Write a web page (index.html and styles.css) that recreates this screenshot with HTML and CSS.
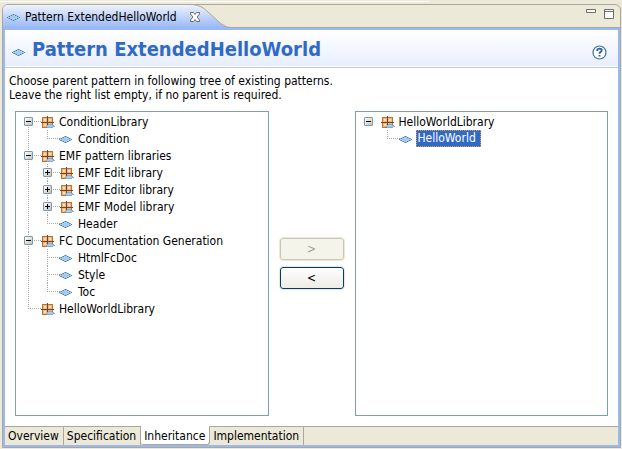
FILE: index.html
```html
<!DOCTYPE html>
<html lang="en">
<head>
<meta charset="utf-8">
<title>Pattern ExtendedHelloWorld</title>
<link rel="stylesheet" href="styles.css">
</head>
<body>
<svg class="defs" aria-hidden="true">
  <symbol id="pattern" viewBox="0 0 14 12">
    <path d="M0 6H1V5H3V4H5V3H8V4H10V5H12V6H13V7H12V8H10V9H8V10H5V9H3V8H1V7H0Z" fill="#a9caea"/>
    <path d="M0 6H1V7H0ZM2 5H3V6H2ZM4 4H5V5H4ZM6 3H7V4H6ZM8 4H9V5H8ZM10 5H11V6H10ZM12 6H13V7H12ZM2 7H3V8H2ZM4 8H5V9H4ZM6 9H7V10H6ZM8 8H9V9H8ZM10 7H11V8H10Z" fill="#3f7fb5"/>
    <path d="M1 5H2V6H1ZM3 4H4V5H3ZM5 3H6V4H5ZM7 3H8V4H7ZM9 4H10V5H9ZM11 5H12V6H11ZM1 7H2V8H1ZM3 8H4V9H3ZM5 9H6V10H5ZM7 9H8V10H7ZM9 8H10V9H9ZM11 7H12V8H11Z" fill="#8ab4da"/>
  </symbol>
  <symbol id="library" viewBox="0 0 14 12">
    <path d="M1 1H12V12H1Z" fill="#c0702f"/>
    <path d="M2 2H6V6H2ZM7 2H11V6H7ZM2 7H6V11H2ZM7 7H11V11H7Z" fill="#f0b67c"/>
    <path d="M3 3H5V5H3ZM8 3H10V5H8ZM3 8H5V10H3Z" fill="#fbe3c4"/>
    <path d="M6 0H7V12H6ZM0 6H13V7H0Z" fill="#70452e"/>
    <path d="M5 10H6V9H7V8H11V9H13V10H14V11H12V12H6V11H5Z" fill="#7faedb"/>
    <path d="M6 10H7V9H11V10H12V11H6Z" fill="#a9caea"/>
  </symbol>
</svg>
<div class="editor">
  <header class="tabbar">
    <div class="tab">
      <svg class="icon"><use href="#pattern"/></svg>
      <span class="tab-name">Pattern ExtendedHelloWorld</span>
      <button class="plain close" aria-label="Close"><svg width="12" height="12" viewBox="0 0 12 12"><path d="M1.500 1.500H4.500L6 3.500L7.500 1.500H10.500V3L8 6L10.500 9V10.500H7.500L6 8.500L4.500 10.500H1.500V9L4 6L1.500 3Z" fill="#fff" stroke="#6f6e66"/></svg></button>
      <svg class="curve" width="46" height="26" viewBox="0 0 46 26">
        <defs><linearGradient id="tabfill" x1="0" y1="0" x2="0" y2="1"><stop offset="0" stop-color="#eef3fe"/><stop offset=".9" stop-color="#99b9f5"/></linearGradient></defs>
        <path d="M0 .5H3C12 .5 17 3 22 8L33 18C38 22 41 23.500 46 23.500V26H0Z" fill="url(#tabfill)"/>
        <path d="M0 .5H3C12 .5 17 3 22 8L33 18C38 22 41 23.500 46 23.500" fill="none" stroke="#aca899"/>
      </svg>
    </div>
    <div class="window-tools">
      <button class="plain" aria-label="Minimize"><svg width="10" height="10" viewBox="0 0 10 10"><path d="M.5 .5H9.500V3.500H.5Z" fill="#fff" stroke="#6f6e66"/></svg></button>
      <button class="plain" aria-label="Maximize"><svg width="10" height="10" viewBox="0 0 10 10"><path d="M.5 .5H9.500V9.500H.5ZM.5 2.500H9.500" fill="#fff" stroke="#6f6e66"/></svg></button>
    </div>
  </header>
  <main class="page">
    <div class="heading">
      <svg class="icon"><use href="#pattern"/></svg>
      <h1>Pattern ExtendedHelloWorld</h1>
      <button class="plain help" aria-label="Help"><svg width="15" height="15" viewBox="0 0 15 15"><circle cx="7.500" cy="7.500" r="6.500" fill="#fff" stroke="#3a72a8" stroke-width="1.200"/><path d="M5.200 6V5C5.200 3.200 9.800 3.200 9.800 5.300C9.800 6.800 7.500 6.800 7.500 8.800M7.500 10V11.500" fill="none" stroke="#2a639c" stroke-width="1.800"/></svg></button>
    </div>
    <p class="intro">Choose parent pattern in following tree of existing patterns.<br>Leave the right list empty, if no parent is required.</p>
    <div class="lists">
      <ul class="tree">
        <li><div class="row"><button class="toggle" aria-label="Collapse"></button><svg class="icon"><use href="#library"/></svg><span>ConditionLibrary</span></div>
          <ul>
            <li><div class="row"><svg class="icon leaf"><use href="#pattern"/></svg><span>Condition</span></div></li>
          </ul>
        </li>
        <li><div class="row"><button class="toggle" aria-label="Collapse"></button><svg class="icon"><use href="#library"/></svg><span>EMF pattern libraries</span></div>
          <ul>
            <li><div class="row"><button class="toggle closed" aria-label="Expand"></button><svg class="icon"><use href="#library"/></svg><span>EMF Edit library</span></div></li>
            <li><div class="row"><button class="toggle closed" aria-label="Expand"></button><svg class="icon"><use href="#library"/></svg><span>EMF Editor library</span></div></li>
            <li><div class="row"><button class="toggle closed" aria-label="Expand"></button><svg class="icon"><use href="#library"/></svg><span>EMF Model library</span></div></li>
            <li><div class="row"><svg class="icon leaf"><use href="#pattern"/></svg><span>Header</span></div></li>
          </ul>
        </li>
        <li><div class="row"><button class="toggle" aria-label="Collapse"></button><svg class="icon"><use href="#library"/></svg><span>FC Documentation Generation</span></div>
          <ul>
            <li><div class="row"><svg class="icon leaf"><use href="#pattern"/></svg><span>HtmlFcDoc</span></div></li>
            <li><div class="row"><svg class="icon leaf"><use href="#pattern"/></svg><span>Style</span></div></li>
            <li><div class="row"><svg class="icon leaf"><use href="#pattern"/></svg><span>Toc</span></div></li>
          </ul>
        </li>
        <li><div class="row"><svg class="icon"><use href="#library"/></svg><span>HelloWorldLibrary</span></div></li>
      </ul>
      <div class="moves">
        <button class="move" disabled>&gt;</button>
        <button class="move">&lt;</button>
      </div>
      <ul class="tree single">
        <li><div class="row"><button class="toggle" aria-label="Collapse"></button><svg class="icon"><use href="#library"/></svg><span>HelloWorldLibrary</span></div>
          <ul>
            <li><div class="row"><svg class="icon leaf"><use href="#pattern"/></svg><span class="selected">HelloWorld</span></div></li>
          </ul>
        </li>
      </ul>
    </div>
  </main>
  <nav class="pages">
    <button>Overview</button><button>Specification</button><button class="current">Inheritance</button><button>Implementation</button>
  </nav>
</div>
</body>
</html>
```
FILE: styles.css
```css
* { box-sizing: border-box; }
body {
  margin: 0;
  height: 100vh;
  padding: 4px 1px 1px 2px;
  display: flex;
  background: linear-gradient(#fff, #fff) 0 1px / 69% 1px no-repeat #ece9d8;
  font: 12px/14px "DejaVu Sans Condensed", "DejaVu Sans", sans-serif;
  color: #000;
}
button { font: inherit; color: inherit; }
.defs { position: absolute; width: 0; height: 0; }
.plain { padding: 0; border: 0; background: none; display: block; flex: none; }
.plain svg { display: block; }
.icon { width: 14px; height: 12px; flex: none; }

.editor {
  flex: 1;
  min-width: 0;
  display: flex;
  flex-direction: column;
  border: 1px solid #aca899;
  border-radius: 6px 6px 0 0;
}
.tabbar {
  height: 25px;
  flex: none;
  display: flex;
  justify-content: space-between;
  background: linear-gradient(#aca899, #aca899) 0 22px / 100% 1px no-repeat, linear-gradient(#99b9f5, #99b9f5) 0 23px / 100% 2px no-repeat;
}
.tab {
  position: relative;
  display: flex;
  align-items: center;
  height: 25px;
  padding: 0 0 2px 4px;
}
.tab::before {
  content: "";
  position: absolute;
  inset: 0 45px 0 0;
  background: linear-gradient(#eef3fe, #99b9f5 90%);
  border-radius: 5px 0 0 0;
}
.tab .icon, .tab-name, .close { position: relative; z-index: 1; }
.tab-name { margin-left: 4px; }
.close { margin-left: 12px; }
.curve { position: relative; margin: 1px 0 0 -15px; }
.window-tools { display: flex; gap: 8px; padding: 4px 6px 0 0; align-items: flex-start; }

.page {
  flex: 1;
  display: flex;
  flex-direction: column;
  border: solid #99b9f5;
  border-width: 0 2px;
  background: #fff;
}
.heading {
  height: 38px;
  flex: none;
  display: flex;
  align-items: center;
  gap: 6px;
  padding: 0 11px 0 7px;
  background: linear-gradient(#fff, #e8eefe) 0 0 / 100% 36px no-repeat;
  border-bottom: 1px solid #b5caf3;
}
.heading .icon { margin-top: 6px; }
h1 { margin: 0; font: bold 20px/24px "DejaVu Sans Condensed", "DejaVu Sans", sans-serif; color: #316ac5; }
.help { margin: 8px 0 0 auto; }
.intro { margin: 6px 4px 9px; }
.lists {
  flex: 1;
  display: grid;
  grid-template-columns: 1fr 66px 1fr;
  gap: 10px;
  padding: 0 10px 10px;
}
.moves { display: flex; flex-direction: column; justify-content: center; gap: 5px; }
.move {
  height: 24px;
  padding: 0;
  border: 1px solid #ece9d8;
  border-radius: 4px;
  background: linear-gradient(#fff, #ecebe5);
  box-shadow: inset 0 0 0 1px #003c74;
}
.move:disabled { box-shadow: inset 0 0 0 1px #c9c7ba; background: #f5f4ea; color: #a1a192; }

.tree, .tree ul { margin: 0; padding: 0; list-style: none; }
.tree { border: 1px solid #7f9db9; padding: 1px 8px; white-space: nowrap; }
.tree ul { padding-left: 19px; }
.tree li {
  background: repeating-linear-gradient(#aca899 0 1px, transparent 1px 2px) 4px 0 / 1px 100% no-repeat;
}
.tree > li:first-child { background-position: 4px 8px; }
.tree li:last-child { background-size: 1px 9px; }
.tree.single > li { background: none; }
.row {
  height: 17px;
  display: flex;
  align-items: center;
  background: repeating-linear-gradient(to right, #aca899 0 1px, transparent 1px 2px) 4px 8px / 13px 1px no-repeat;
}
.single > li > .row { background: none; }
.row > .icon { margin: 0 4px 0 8px; }
.row > .icon:first-child { margin-left: 17px; }
.row > .leaf:first-child { margin: 1px 5px 0 16px; }
.toggle {
  width: 9px;
  height: 9px;
  padding: 0;
  border: 1px solid #7898b5;
  border-radius: 1px;
  background:
    linear-gradient(#000, #000) 1px 3px / 5px 1px no-repeat,
    linear-gradient(135deg, #fff, #c8c2b4);
}
.toggle.closed {
  background:
    linear-gradient(#000, #000) 1px 3px / 5px 1px no-repeat,
    linear-gradient(#000, #000) 3px 1px / 1px 5px no-repeat,
    linear-gradient(135deg, #fff, #c8c2b4);
}
.selected {
  height: 17px;
  margin-left: -2px;
  padding: 0 4px 0 1px;
  border: 1px dotted #e0a040;
  background: #316ac5;
  color: #fff;
}

.pages {
  height: 21px;
  flex: none;
  display: flex;
  border: solid #99b9f5;
  border-width: 0 2px 2px;
  background: linear-gradient(#aca899, #aca899) 0 0 / 100% 1px no-repeat #ece9d8;
}
.pages button {
  padding: 0 4px 0 3px;
  border: solid #aca899;
  border-width: 1px 1px 0 0;
  background: none;
}
.pages .current { padding-top: 2px; border-width: 0 1px 1px 0; border-radius: 0 0 3px 3px; background: #fff; }
```
